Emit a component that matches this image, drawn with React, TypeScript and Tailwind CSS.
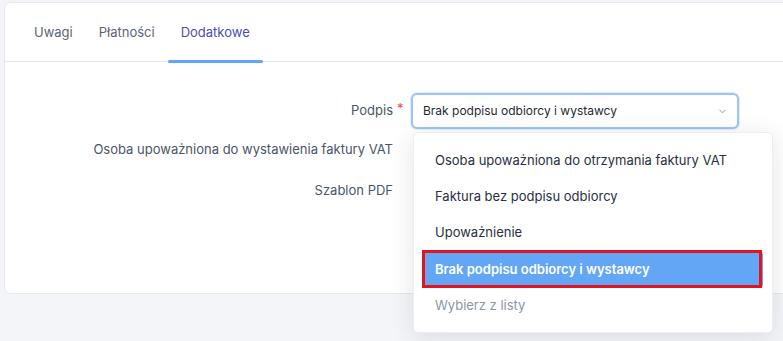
import { ChevronDown } from 'lucide-react'

const tabs = ['Uwagi', 'Płatności', 'Dodatkowe']

const options = [
  'Osoba upoważniona do otrzymania faktury VAT',
  'Faktura bez podpisu odbiorcy',
  'Upoważnienie',
  'Brak podpisu odbiorcy i wystawcy',
]

export default function App() {
  return (
    <div className="relative h-[341px] w-[783px] overflow-hidden bg-[#f4f5f8] pl-[4px] pt-[2px] font-['Inter',sans-serif] text-[13px]">
      <div className="h-[292px] w-[820px] rounded-[7px] border border-[#e6e8ee] bg-white">
        {/* zakładki */}
        <div className="flex h-[59px] border-b border-[#e5e7eb] px-[16px]">
          {tabs.map(t => {
            const active = t === 'Dodatkowe'
            return (
              <div
                key={t}
                className={
                  active
                    ? 'relative flex items-center px-[13px] text-[#4a4fb0]'
                    : 'relative flex items-center px-[13px] text-[#5d6373]'
                }
              >
                <span className="pt-[1px]">{t}</span>
                {active && <div className="absolute -bottom-[2px] left-0 right-0 h-[3px] rounded-full bg-[#60a5fa]" />}
              </div>
            )
          })}
        </div>

        <div className="pt-[31px]">
          <div className="flex h-[36px] items-center">
            <div className="relative w-[388px] text-right text-[#4b5565]">
              Podpis
              <span className="absolute left-[392px] top-[-2px] text-[#e24c4c]">*</span>
            </div>
            <div className="ml-[18px] flex h-[36px] w-[328px] items-center justify-between rounded-[6px] border-2 border-[#9cc4f7] bg-white pl-[10px] pr-[9px] text-[12px] text-[#1f2937] shadow-[0_0_0_1px_#e3edfb]">
              <span>Brak podpisu odbiorcy i wystawcy</span>
              <ChevronDown size={11} className="text-[#8a93a3]" strokeWidth={2} />
            </div>
          </div>
          <div className="mt-[3px] flex h-[36px] items-center">
            <div className="w-[388px] text-right text-[#4b5565]">Osoba upoważniona do wystawienia faktury VAT</div>
          </div>
          <div className="mt-[5px] flex h-[36px] items-center">
            <div className="w-[388px] text-right text-[#4b5565]">Szablon PDF</div>
          </div>
        </div>
      </div>

      {/* lista rozwijana */}
      <div className="absolute left-[413px] top-[132px] w-[360px] rounded-[5px] border border-[#eceef2] bg-white px-[9px] pb-[8px] pt-[10px] shadow-[0_4px_24px_rgba(30,40,70,0.12)]">
        {options.map(o => {
          const sel = o === 'Brak podpisu odbiorcy i wystawcy'
          return (
            <div
              key={o}
              className={
                sel
                  ? 'relative mt-[1px] flex h-[36px] items-center rounded-[3px] bg-[#63a6f6] px-[12px] font-semibold text-white'
                  : 'flex h-[36px] items-center px-[12px] text-[#283040]'
              }
            >
              {o}
              {sel && <div className="absolute -left-[1px] -top-[2px] bottom-0 right-[1px] border-[3px] border-[#e3141f]" />}
            </div>
          )
        })}
        <div className="flex h-[36px] items-center px-[12px] text-[#8b95a6]">Wybierz z listy</div>
      </div>
    </div>
  )
}
